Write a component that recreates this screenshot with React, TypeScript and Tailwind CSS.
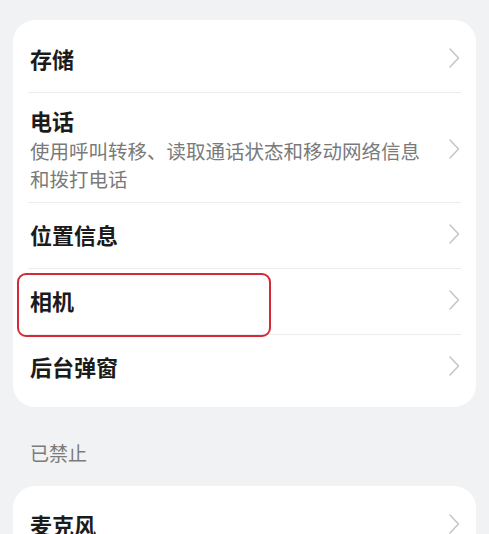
import React from 'react'

const font = { fontFamily: '"Noto Sans CJK SC", "Noto Sans", sans-serif' }

const Chevron = () => (
  <svg width="12" height="22" viewBox="0 0 12 22" fill="none" className="shrink-0">
    <path d="M2 2l8.5 9L2 20" stroke="#c6c6c8" strokeWidth="1.6" strokeLinecap="round" strokeLinejoin="round" />
  </svg>
)

interface RowProps {
  title: string
  subtitle?: string
  highlight?: boolean
  divider?: boolean
}

const Row: React.FC<RowProps> = ({ title, subtitle, highlight, divider = true }) => (
  <div className="relative">
    <div className={`flex items-center justify-between pl-[17px] pr-[16px] ${subtitle ? 'pt-[12px] pb-[9px]' : 'h-[65px] pb-[3px]'}`}>
      <div className="flex-1 pr-6">
        <div className="text-[22px] leading-[30px] font-semibold text-[#1b1b1b]">{title}</div>
        {subtitle && (
          <div className="text-[19.5px] leading-[28px] text-[#7a7a7a] mt-[2px]">{subtitle}</div>
        )}
      </div>
      <Chevron />
    </div>
    {highlight && (
      <div className="absolute left-[4px] top-[4px] w-[254px] h-[64px] rounded-[9px] border-[2.5px] border-[#d42a35]" />
    )}
    {divider && <div className="mx-[15px] h-px bg-[#ececee]" />}
  </div>
)

export default function App() {
  return (
    <div className="w-[489px] h-[534px] overflow-hidden bg-[#f1f2f4]" style={font}>
      <div className="pt-[20px] px-[13px]">
        <div className="bg-white rounded-[22px] py-[7px]">
          <Row title="存储" />
          <Row title="电话" subtitle="使用呼叫转移、读取通话状态和移动网络信息和拨打电话" />
          <Row title="位置信息" />
          <Row title="相机" highlight />
          <Row title="后台弹窗" divider={false} />
        </div>
        <div className="pl-[17px] pt-[32px] pb-[19px] text-[19px] leading-[28px] text-[#7b7b7b]">已禁止</div>
        <div className="bg-white rounded-[22px] pt-[7px]">
          <Row title="麦克风" />
        </div>
      </div>
    </div>
  )
}
